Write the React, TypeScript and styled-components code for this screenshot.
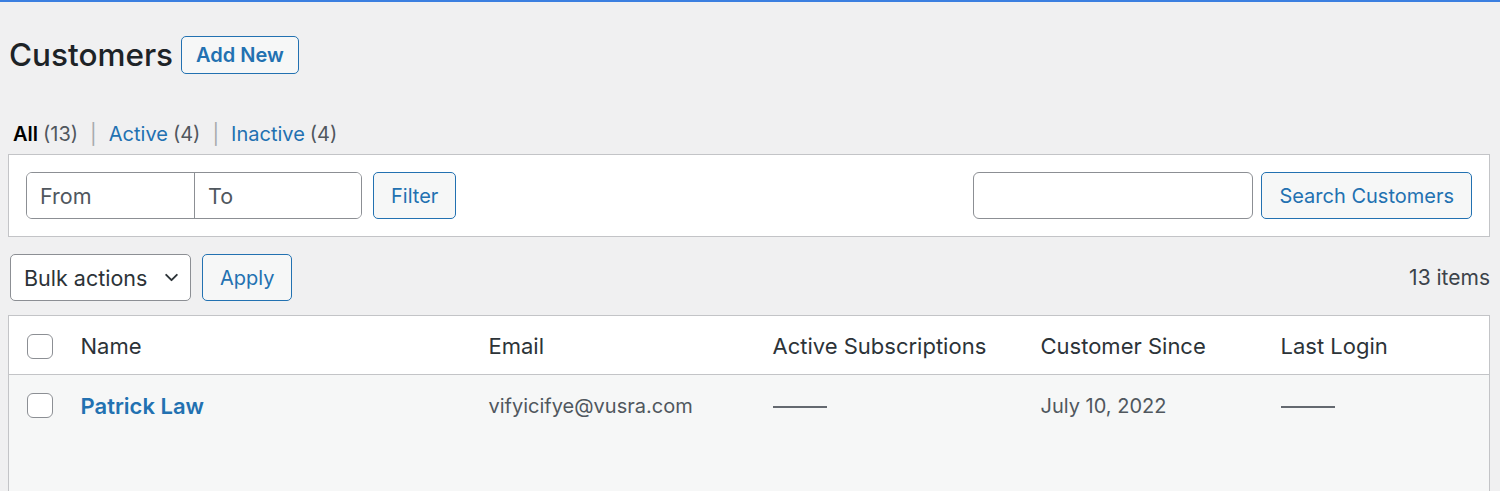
import React from "react";
import styled, { createGlobalStyle } from "styled-components";

const GlobalStyle = createGlobalStyle`
  * { box-sizing: border-box; }
  body {
    margin: 0;
    background: #f0f0f1;
    border-top: 2px solid #3b7fe0;
    font-family: Inter, Roboto, "Liberation Sans", sans-serif;
    color: #2c3338;
    font-size: 20px;
  }
`;

const Page = styled.div`
  padding: 0 10px 0 8px;
  height: 489px;
  overflow: hidden;
`;

const Header = styled.div`
  display: flex;
  align-items: center;
  gap: 8px;
  padding-top: 33px;
`;

const Title = styled.h1`
  margin: 0 0 0 1px;
  font-size: 31.5px;
  font-weight: 500;
  color: #1d2327;
`;

const Button = styled.button<{ bold?: boolean }>`
  height: 47px;
  padding: 0 17px;
  border: 1.5px solid #2271b1;
  border-radius: 5px;
  background: #f6f7f7;
  color: #2271b1;
  font-family: inherit;
  font-size: 20px;
  font-weight: ${(p) => (p.bold ? 600 : 400)};
  cursor: pointer;
`;

const AddNew = styled(Button)`
  height: 38px;
  padding: 0 14px;
`;

const Views = styled.div`
  display: flex;
  align-items: center;
  margin: 48px 0 0 5px;
  height: 24px;
  color: #50575e;
`;

const ViewLink = styled.a<{ current?: boolean }>`
  color: ${(p) => (p.current ? "#000" : "#2271b1")};
  font-weight: ${(p) => (p.current ? 600 : 400)};
  text-decoration: none;
`;

const Count = styled.span`
  color: #50575e;
  margin-left: 5px;
`;

const Sep = styled.span`
  color: #a7aaad;
  margin: 0 12px;
`;

const FilterBox = styled.div`
  display: flex;
  justify-content: space-between;
  align-items: center;
  margin-top: 8px;
  height: 83px;
  padding: 0 17px;
  background: #fff;
  border: 1.5px solid #c3c4c7;
`;

const Group = styled.div<{ gap?: number }>`
  display: flex;
  align-items: center;
  gap: ${(p) => p.gap ?? 10}px;
`;

const DateRange = styled.div`
  display: flex;
  height: 47px;
  border: 1.5px solid #8c8f94;
  border-radius: 6px;
  overflow: hidden;
`;

const DateInput = styled.input`
  width: 167px;
  height: 100%;
  border: none;
  padding: 0 13px;
  font-family: inherit;
  font-size: 21.5px;
  color: #2c3338;
  outline: none;
  & + & {
    border-left: 1.5px solid #8c8f94;
  }
  &::placeholder {
    color: #50575e;
  }
`;

const SearchInput = styled.input`
  width: 280px;
  height: 47px;
  border: 1.5px solid #8c8f94;
  border-radius: 6px;
  font-family: inherit;
  font-size: 21.5px;
  padding: 0 12px;
  outline: none;
`;

const TableNav = styled.div`
  display: flex;
  justify-content: space-between;
  align-items: center;
  margin-top: 17px;
  padding-left: 2px;
`;

const Select = styled.div`
  display: flex;
  align-items: center;
  justify-content: space-between;
  width: 181px;
  height: 47px;
  padding: 0 10px 0 13px;
  background: #fff;
  border: 1.5px solid #8c8f94;
  border-radius: 5px;
  color: #2c3338;
  font-size: 21.5px;
`;

const ItemCount = styled.span`
  color: #3c434a;
  font-size: 21px;
`;

const Table = styled.table`
  width: 100%;
  margin-top: 14px;
  border-collapse: collapse;
  border: 1.5px solid #c3c4c7;
  background: #fff;
  table-layout: fixed;
`;

const Th = styled.th<{ w?: number }>`
  width: ${(p) => (p.w ? `${p.w}px` : "auto")};
  height: 59px;
  padding: 2px 0 0;
  text-align: left;
  font-size: 22px;
  font-weight: 400;
  color: #2c3338;
  border-bottom: 1.5px solid #c3c4c7;
`;

const Row = styled.tr`
  background: #f6f7f7;
`;

const Td = styled.td`
  height: 62px;
  padding: 0;
  color: #50575e;
  vertical-align: middle;
`;

const Spacer = styled.tr`
  background: #f6f7f7;
  height: 60px;
`;

const CheckCell = styled.div`
  display: flex;
  align-items: center;
  padding-left: 18px;
`;

const Checkbox = styled.span`
  display: inline-block;
  width: 26px;
  height: 25px;
  border: 1.5px solid #8c8f94;
  border-radius: 6px;
  background: #fff;
`;

const NameLink = styled.a`
  color: #2271b1;
  font-size: 22px;
  font-weight: 600;
  text-decoration: none;
`;

const Dash = styled.span`
  display: inline-block;
  width: 54px;
  height: 2px;
  background: #646970;
  vertical-align: middle;
`;

const Chevron = () => (
  <svg width="17" height="17" viewBox="0 0 16 16" fill="none">
    <path d="M3 5.5l5 5 5-5" stroke="#2c3338" strokeWidth="1.8" strokeLinecap="round" strokeLinejoin="round" />
  </svg>
);

export default function App() {
  return (
    <>
      <GlobalStyle />
      <Page>
        <Header>
          <Title>Customers</Title>
          <AddNew bold>Add New</AddNew>
        </Header>

        <Views>
          <ViewLink current>All</ViewLink>
          <Count>(13)</Count>
          <Sep>|</Sep>
          <ViewLink>Active</ViewLink>
          <Count>(4)</Count>
          <Sep>|</Sep>
          <ViewLink>Inactive</ViewLink>
          <Count>(4)</Count>
        </Views>

        <FilterBox>
          <Group gap={11}>
            <DateRange>
              <DateInput placeholder="From" />
              <DateInput placeholder="To" />
            </DateRange>
            <Button>Filter</Button>
          </Group>
          <Group gap={8}>
            <SearchInput />
            <Button>Search Customers</Button>
          </Group>
        </FilterBox>

        <TableNav>
          <Group gap={11}>
            <Select>
              <span>Bulk actions</span>
              <Chevron />
            </Select>
            <Button>Apply</Button>
          </Group>
          <ItemCount>13 items</ItemCount>
        </TableNav>

        <Table>
          <thead>
            <tr>
              <Th w={72}>
                <CheckCell>
                  <Checkbox />
                </CheckCell>
              </Th>
              <Th w={408}>Name</Th>
              <Th w={284}>Email</Th>
              <Th w={268}>Active Subscriptions</Th>
              <Th w={240}>Customer Since</Th>
              <Th>Last Login</Th>
            </tr>
          </thead>
          <tbody>
            <Row>
              <Td>
                <CheckCell>
                  <Checkbox />
                </CheckCell>
              </Td>
              <Td>
                <NameLink>Patrick Law</NameLink>
              </Td>
              <Td>vifyicifye@vusra.com</Td>
              <Td>
                <Dash />
              </Td>
              <Td>July 10, 2022</Td>
              <Td>
                <Dash />
              </Td>
            </Row>
            <Spacer>
              <td colSpan={6} />
            </Spacer>
          </tbody>
        </Table>
      </Page>
    </>
  );
}
